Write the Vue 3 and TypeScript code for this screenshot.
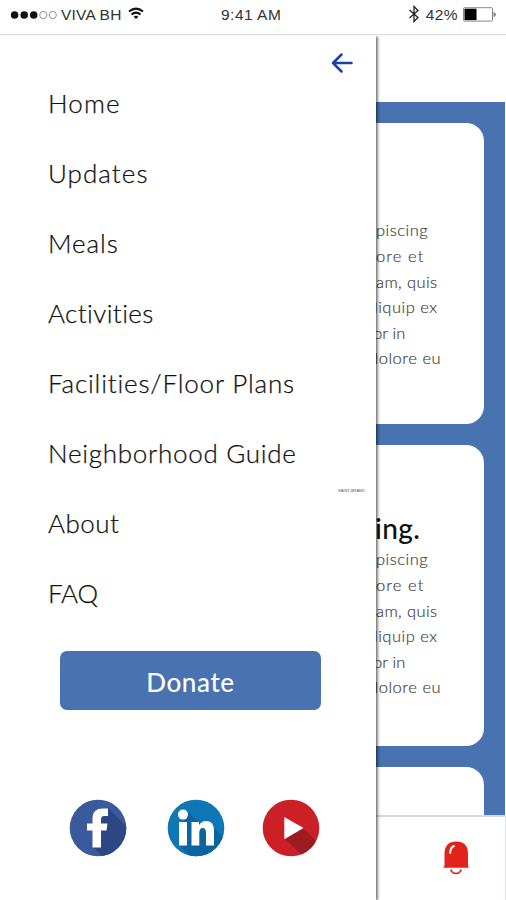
<script setup lang="ts">
interface MenuItem {
  label: string
  tracking: number
}
interface Line {
  text: string
  indent: number
  tracking: number
}

const menu: MenuItem[] = [
  { label: 'Home', tracking: 1.1 },
  { label: 'Updates', tracking: 1.05 },
  { label: 'Meals', tracking: 0.9 },
  { label: 'Activities', tracking: 0.4 },
  { label: 'Facilities/Floor Plans', tracking: 0.82 },
  { label: 'Neighborhood Guide', tracking: 0.72 },
  { label: 'About', tracking: 0.5 },
  { label: 'FAQ', tracking: -0.2 },
]

const lines: Line[] = [
  { text: 'piscing', indent: 1, tracking: 0.5 },
  { text: 'ore et', indent: 1, tracking: 1.1 },
  { text: 'am, quis', indent: 1, tracking: 0.4 },
  { text: 'liquip ex', indent: -1, tracking: 0.5 },
  { text: 'or in', indent: -2, tracking: 0.1 },
  { text: 'dolore eu', indent: -6, tracking: 0.55 },
]
</script>

<template>
  <div class="screen">
    <header class="status">
      <div class="carrier">
        <svg class="signal" width="48" height="10" viewBox="0 0 48 10">
          <g fill="#111">
            <circle cx="4.6" cy="5" r="3.8" /><circle cx="14.2" cy="5" r="3.8" /><circle cx="23.7" cy="5" r="3.8" />
          </g>
          <g fill="none" stroke="#777" stroke-width=".8">
            <circle cx="33.3" cy="5" r="3.6" /><circle cx="42.8" cy="5" r="3.6" />
          </g>
        </svg>
        <span class="operator">VIVA BH</span>
        <svg class="wifi" width="16" height="13" viewBox="0 0 16 13" fill="none" stroke="#111" stroke-width="2">
          <path d="M1 4.5Q8 -1.2 15 4.5" />
          <path d="M3.5 7.5Q8 3.8 12.5 7.5" />
          <path d="M5.6 9.7Q8 7.8 10.4 9.7L8 12Z" fill="#111" stroke="none" />
        </svg>
      </div>
      <div class="clock">9:41 AM</div>
      <div class="power">
        <svg class="bluetooth" width="12" height="18" viewBox="0 0 12 18" fill="none" stroke="#222" stroke-width="1.3">
          <path d="M1.5 5L10 12.5L6 16.5V1.5L10 5.5L1.5 13" />
        </svg>
        <span class="percent">42%</span>
        <svg class="battery" width="34" height="15" viewBox="0 0 34 15">
          <rect x=".5" y=".7" width="29" height="13.4" rx="1" fill="#fff" stroke="#888" />
          <rect x="1.5" y="1.7" width="12" height="11.4" fill="#000" />
          <path d="M30.5 4.7Q33 6 33 7.4Q33 9 30.5 10.2Z" fill="#888" />
        </svg>
      </div>
    </header>

    <main class="feed">
      <article class="card">
        <p v-for="line in lines" :key="line.text" class="line" :style="{ marginLeft: line.indent + 'px', letterSpacing: line.tracking + 'px' }">{{ line.text }}</p>
      </article>
      <article class="card titled">
        <h2>ing.</h2>
        <p v-for="line in lines" :key="line.text" class="line" :style="{ marginLeft: line.indent + 'px', letterSpacing: line.tracking + 'px' }">{{ line.text }}</p>
      </article>
      <article class="card last"></article>
    </main>

    <footer class="tabs">
      <svg width="28" height="36" viewBox="0 0 28 36">
        <path d="M2.5 26V14Q2.5 1.5 14.2 1.5Q26 1.5 26 14V26L27 27.8H1Z" fill="#e2231a" />
        <path d="M8.2 13Q8.2 7.5 12 6" fill="none" stroke="#fff" stroke-width="2" stroke-linecap="round" />
        <path d="M8.8 29.5Q10 33.4 14 33.4Q18 33.4 19.2 29.5" fill="none" stroke="#e2231a" stroke-width="1.6" />
      </svg>
    </footer>

    <aside class="drawer">
      <button class="back" aria-label="Back">
        <svg width="22" height="20" viewBox="0 0 22 20" fill="none" stroke="#1d3fae" stroke-width="2.5" stroke-linecap="round" stroke-linejoin="round">
          <path d="M10.5 1.5L2 10L10.5 18.5M2 10H20.5" />
        </svg>
      </button>
      <nav class="menu">
        <a v-for="item in menu" :key="item.label" class="entry" :style="{ letterSpacing: item.tracking + 'px' }">{{ item.label }}</a>
      </nav>
      <button class="donate">Donate</button>
      <div class="social">
        <svg width="58" height="58" viewBox="0 0 58 58">
          <defs><clipPath id="disc"><circle cx="29" cy="29" r="28.3" /></clipPath></defs>
          <circle cx="29" cy="29" r="28.3" fill="#3b5a9d" />
          <path clip-path="url(#disc)" d="M39 9L60 30V60H36L24 48L32 20Z" fill="#2d4785" />
          <path d="M39 9.5H34Q23.5 9.5 23.5 19V24.5H18V31.5H23.5V48.5H32V31.5H37.5L38.5 24.5H32V20Q32 17 35 17H39Z" fill="#fff" />
        </svg>
        <svg width="58" height="58" viewBox="0 0 58 58">
          <circle cx="29" cy="29" r="28.3" fill="#0f77b5" />
          <path clip-path="url(#disc)" d="M19 12L32 23L42 24L60 42V60H26L12 46Z" fill="#0a649f" />
          <circle cx="16" cy="15.6" r="5" fill="#fff" />
          <path d="M12 23H20V46.5H12ZM24.5 23H32V26Q34.5 22 39.5 22Q47 22 47 32V46.5H39V34Q39 29 35.7 29Q32.3 29 32.3 34V46.5H24.5Z" fill="#fff" />
        </svg>
        <svg class="video" width="58" height="58" viewBox="0 0 58 58">
          <circle cx="29" cy="29" r="28.3" fill="#cb2027" />
          <path clip-path="url(#disc)" d="M41 29L58 46L44 60L23 40Z" fill="#9c1c20" />
          <path d="M22.3 18L41.5 29L22.3 40.3Z" fill="#fff" />
        </svg>
      </div>
      <span class="note">SAINT-BRAND</span>
    </aside>
  </div>
</template>

<style>
body {
  margin: 0;
}
</style>

<style scoped>
.screen {
  position: relative;
  display: flex;
  flex-direction: column;
  width: 506px;
  height: 900px;
  overflow: hidden;
  background: #fff;
  font-family: Lato, sans-serif;
}
.status {
  display: grid;
  grid-template-columns: 211px 1fr auto;
  flex: none;
  height: 34px;
  box-sizing: border-box;
  padding: 0 9px 6px 10px;
  box-shadow: 0 1px 1px #ddd;
  align-items: center;
  color: #333;
  font: 15.5px/28px "Liberation Sans", sans-serif;
}
.carrier,
.power {
  display: flex;
  align-items: center;
}
.signal {
  margin-top: 1px;
}
.operator {
  width: 62px;
  margin: 0 5px 0 3px;
  white-space: nowrap;
  letter-spacing: 0.2px;
}
.wifi {
  margin-top: -2px;
}
.clock {
  padding-top: 1px;
  letter-spacing: 0.5px;
}
.power {
  justify-content: flex-end;
}
.bluetooth {
  margin-top: -1px;
}
.percent {
  margin: 0 5px 0 6px;
  letter-spacing: 0.4px;
}
.feed {
  display: flex;
  flex-direction: column;
  flex: none;
  gap: 21px;
  height: 713.5px;
  box-sizing: border-box;
  margin: 67.5px 1px 0 0;
  padding: 21.5px 21.5px 0 340px;
  overflow: hidden;
  background: #4872b0;
}
.card {
  flex: none;
  height: 301px;
  box-sizing: border-box;
  padding: 95.4px 0 0 35px;
  border-radius: 0 18px 18px 0;
  background: #fff;
}
.titled {
  padding-top: 64.4px;
}
.last {
  height: 80px;
}
h2 {
  height: 38px;
  margin: 0;
  color: #111;
  font-size: 28px;
  font-weight: 500;
  line-height: 38px;
  letter-spacing: 0.4px;
}
.line {
  height: 25.6px;
  margin: 0;
  color: #444;
  font-size: 16.5px;
  font-weight: 300;
  line-height: 25.6px;
  white-space: nowrap;
  -webkit-text-stroke: 0.2px #444;
}
.tabs {
  display: flex;
  flex: 1;
  justify-content: flex-end;
  align-items: flex-start;
  padding: 23px 35px 0 0;
  border-top: 2px solid #d9d9db;
  border-right: 1px solid #dbe5f2;
}
.drawer {
  position: absolute;
  top: 36px;
  left: 0;
  display: flex;
  flex-direction: column;
  width: 376px;
  height: 864px;
  background: #fff;
  box-shadow: 1px 0 3px 0.5px rgba(0, 0, 0, 0.65);
  clip-path: inset(0 -8px 0 0);
}
.back {
  align-self: flex-end;
  height: 20px;
  margin: 17px 23px 0 0;
  padding: 0;
  border: 0;
  background: none;
}
.back svg {
  display: block;
}
.menu {
  display: flex;
  flex-direction: column;
  margin: -5px 0 0 48px;
}
.entry {
  height: 70px;
  color: #111;
  font-size: 26px;
  font-weight: 300;
  line-height: 70px;
  white-space: nowrap;
  -webkit-text-stroke: 0.25px #111;
}
.donate {
  width: 261px;
  height: 59px;
  margin: 23px 0 0 60px;
  padding: 0;
  border: 0;
  border-radius: 7px;
  background: #4872b0;
  color: #fff;
  font: 500 26px/62px Lato, sans-serif;
  letter-spacing: 0.6px;
}
.social {
  display: flex;
  gap: 40px;
  margin: 88.5px 0 0 69px;
}
.video {
  margin-left: -3px;
}
.note {
  position: absolute;
  top: 451px;
  left: 338px;
  color: #555;
  font: 4px/8px "Liberation Sans", sans-serif;
  white-space: nowrap;
}
</style>
